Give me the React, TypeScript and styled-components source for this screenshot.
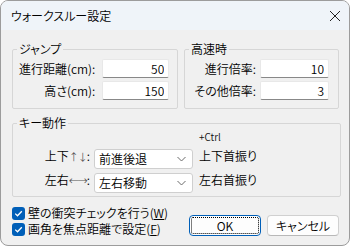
import styled, { createGlobalStyle } from 'styled-components';

const GlobalStyle = createGlobalStyle`
  body {
    margin: 0;
    background: #ffffff;
    font-family: "Noto Sans CJK JP", "Noto Sans", sans-serif;
    font-feature-settings: "palt";
    font-size: 12px;
    font-weight: 350;
    color: #000;
  }
`;

function App() {
  return (
    <>
      <GlobalStyle />
      <Window>
        <TitleBar>
          <Title>ウォークスルー設定</Title>
          <CloseIcon width="12" height="12" viewBox="0 0 12 12">
            <path d="M1 1 L11 11 M11 1 L1 11" stroke="#222" strokeWidth="1" fill="none" />
          </CloseIcon>
        </TitleBar>
        <Body>
          <TopRow>
            <Group $width={166}>
              <Legend>ジャンプ</Legend>
              <FieldGrid $inputWidth={67} $gap={7}>
                <FieldLabel>進行距離(cm):</FieldLabel>
                <NumberInput readOnly value="50" />
                <FieldLabel>高さ(cm):</FieldLabel>
                <NumberInput readOnly value="150" />
              </FieldGrid>
            </Group>
            <Group $width={155}>
              <Legend>高速時</Legend>
              <FieldGrid $inputWidth={69} $gap={4}>
                <FieldLabel>進行倍率:</FieldLabel>
                <NumberInput readOnly value="10" />
                <FieldLabel>その他倍率:</FieldLabel>
                <NumberInput readOnly value="3" />
              </FieldGrid>
            </Group>
          </TopRow>

          <KeyGroup>
            <Legend>キー動作</Legend>
            <KeyGrid>
              <span />
              <span />
              <CtrlNote>+Ctrl</CtrlNote>

              <KeyLabel>
                上下<Arrow>↑↓</Arrow>:
              </KeyLabel>
              <Combo>
                <span>前進後退</span>
                <Chevron />
              </Combo>
              <KeyLabel>上下首振り</KeyLabel>

              <KeyLabel>
                左右<Arrow>←→</Arrow>:
              </KeyLabel>
              <Combo>
                <span>左右移動</span>
                <Chevron />
              </Combo>
              <KeyLabel>左右首振り</KeyLabel>
            </KeyGrid>
          </KeyGroup>

          <BottomRow>
            <CheckList>
              <CheckRow>
                <CheckBox>
                  <Tick />
                </CheckBox>
                <span>
                  壁の衝突チェックを行う(<u>W</u>)
                </span>
              </CheckRow>
              <CheckRow>
                <CheckBox>
                  <Tick />
                </CheckBox>
                <span>
                  画角を焦点距離で設定(<u>F</u>)
                </span>
              </CheckRow>
            </CheckList>
            <ButtonRow>
              <Button $primary>
                <FocusRing>OK</FocusRing>
              </Button>
              <Button>キャンセル</Button>
            </ButtonRow>
          </BottomRow>
        </Body>
      </Window>
    </>
  );
}

function Chevron() {
  return (
    <svg width="9" height="6" viewBox="0 0 9 6">
      <path d="M0.5 1 L4.5 5 L8.5 1" stroke="#6a6a6a" strokeWidth="1" fill="none" />
    </svg>
  );
}

function Tick() {
  return (
    <svg width="9" height="9" viewBox="0 0 9 9">
      <path d="M1.2 4.6 L3.5 6.8 L7.8 2.2" stroke="#fff" strokeWidth="1.3" fill="none" />
    </svg>
  );
}

export default App;

const Window = styled.div`
  width: 350px;
  height: 246px;
  box-sizing: border-box;
  border: 1px solid #9c9c9c;
  border-radius: 8px;
  overflow: hidden;
  background: #f0f0f0;
  display: flex;
  flex-direction: column;
`;

const TitleBar = styled.div`
  height: 29px;
  flex-shrink: 0;
  background: #eff4f9;
  display: flex;
  align-items: center;
  justify-content: space-between;
  padding: 0 8px 0 10px;
`;

const Title = styled.span`
  font-size: 12px;
  line-height: 14px;
`;

const CloseIcon = styled.svg`
  display: block;
  margin-top: 1px;
`;

const Body = styled.div`
  flex: 1;
  display: flex;
  flex-direction: column;
  padding: 12px 8px 0 11px;
`;

const TopRow = styled.div`
  display: flex;
  gap: 6px;
  margin-right: 2px;
`;

const Group = styled.fieldset<{ $width: number }>`
  width: ${(p) => p.$width}px;
  box-sizing: border-box;
  margin: 0;
  min-width: 0;
  height: 67px;
  border: 1px solid #d6d6d6;
  border-radius: 2px;
  padding: 3px 9px 0 6px;
`;

const Legend = styled.legend`
  font-size: 12px;
  line-height: 14px;
  padding: 0 2px;
  margin-left: -2px;
`;

const FieldGrid = styled.div<{ $inputWidth: number; $gap: number }>`
  display: grid;
  grid-template-columns: 1fr ${(p) => p.$inputWidth}px;
  column-gap: ${(p) => p.$gap}px;
  row-gap: 3px;
  align-items: center;
`;

const FieldLabel = styled.span`
  justify-self: end;
  font-size: 12px;
  line-height: 14px;
  white-space: nowrap;
`;

const NumberInput = styled.input`
  box-sizing: border-box;
  width: 100%;
  height: 19px;
  margin: 0;
  padding: 0 4px 0 0;
  border: 1px solid #e8e8e8;
  border-bottom-color: #888888;
  border-radius: 2px;
  background: #ffffff;
  text-align: right;
  font-family: "Noto Sans CJK JP", "Noto Sans", sans-serif;
  font-weight: 350;
  font-size: 12px;
  color: #000;
  outline: none;
`;

const KeyGroup = styled.fieldset`
  margin: 7px 0 0 0;
  min-width: 0;
  box-sizing: border-box;
  height: 81px;
  border: 1px solid #d6d6d6;
  border-radius: 2px;
  padding: 0 0 0 6px;
`;

const KeyGrid = styled.div`
  display: grid;
  grid-template-columns: 77px 99px auto;
  grid-template-rows: 16px 20px 20px;
  column-gap: 4px;
  row-gap: 4px;
  margin: -1px 0 0 -6px;
  & > :nth-child(3n) {
    margin-left: 2px;
  }
`;

const CtrlNote = styled.span`
  font-size: 10px;
  line-height: 12px;
  align-self: center;
  color: #111;
`;

const KeyLabel = styled.span`
  justify-self: end;
  align-self: start;
  font-size: 12px;
  line-height: 14px;
  white-space: nowrap;
  &:nth-child(3n) {
    justify-self: start;
  }
`;

const Arrow = styled.span`
  color: #555;
  font-size: 10px;
  letter-spacing: -1px;
`;

const Combo = styled.div`
  box-sizing: border-box;
  height: 20px;
  border: 1px solid #cfcfcf;
  border-radius: 3px;
  background: #ffffff;
  display: flex;
  align-items: center;
  justify-content: space-between;
  padding: 0 6px 0 4px;
  font-size: 12px;
  line-height: 14px;
`;

const BottomRow = styled.div`
  display: flex;
  justify-content: space-between;
  align-items: flex-end;
  margin-top: 8px;
  margin-right: 2px;
`;

const CheckList = styled.div`
  display: flex;
  flex-direction: column;
`;

const CheckRow = styled.div`
  display: flex;
  align-items: center;
  gap: 3px;
  height: 16px;
  font-size: 12px;
  line-height: 14px;
`;

const CheckBox = styled.span`
  width: 13px;
  height: 13px;
  box-sizing: border-box;
  border-radius: 3px;
  background: #005fb8;
  display: flex;
  align-items: center;
  justify-content: center;
`;

const ButtonRow = styled.div`
  display: flex;
  gap: 6px;
  margin-bottom: 1px;
`;

const Button = styled.div<{ $primary?: boolean }>`
  box-sizing: border-box;
  width: 72px;
  height: 21px;
  border: 1px solid ${(p) => (p.$primary ? '#005fb8' : '#d0d0d0')};
  border-bottom-color: ${(p) => (p.$primary ? '#005fb8' : '#b8b8b8')};
  border-radius: 4px;
  background: #fdfdfd;
  display: flex;
  align-items: center;
  justify-content: center;
  padding: 1px;
  font-size: 12px;
  line-height: 14px;
`;

const FocusRing = styled.span`
  flex: 1;
  align-self: stretch;
  display: flex;
  align-items: center;
  justify-content: center;
  border: 1px dotted #000;
  border-radius: 2px;
`;
